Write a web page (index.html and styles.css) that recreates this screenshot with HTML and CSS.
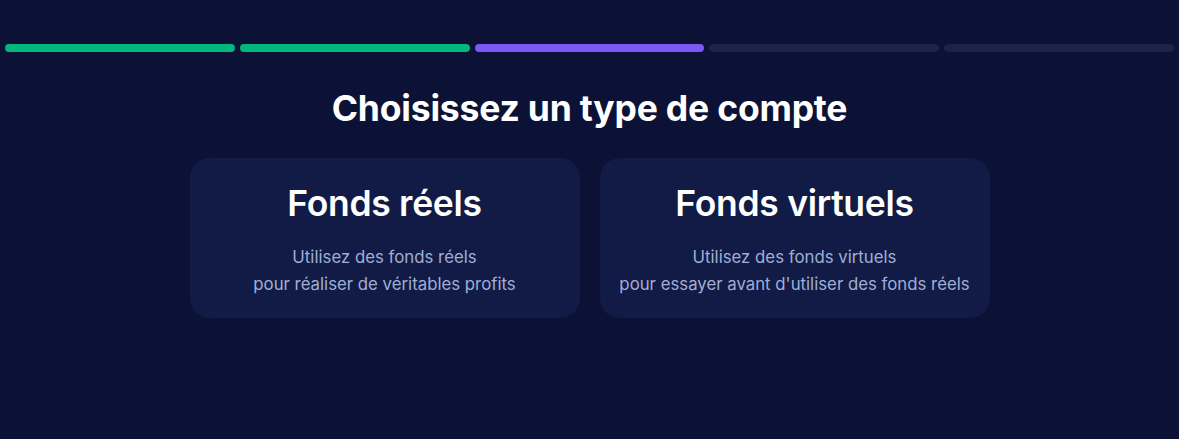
FILE: index.html
```html
<!DOCTYPE html>
<html lang="fr">
<head>
<meta charset="utf-8">
<link rel="stylesheet" href="styles.css">
</head>
<body>
<div class="page">
  <div class="progress">
    <div class="step done"></div>
    <div class="step done"></div>
    <div class="step current"></div>
    <div class="step"></div>
    <div class="step"></div>
  </div>
  <h1 class="title">Choisissez un type de compte</h1>
  <div class="cards">
    <div class="card">
      <h2 class="card-title">Fonds réels</h2>
      <p class="card-text">Utilisez des fonds réels<br>pour réaliser de véritables profits</p>
    </div>
    <div class="card">
      <h2 class="card-title">Fonds virtuels</h2>
      <p class="card-text">Utilisez des fonds virtuels<br>pour essayer avant d'utiliser des fonds réels</p>
    </div>
  </div>
</div>
</body>
</html>
```
FILE: styles.css
```css
html, body {
  margin: 0;
  padding: 0;
  background: #0b1236;
  height: 100%;
}
body {
  font-family: "Inter", "Noto Sans", sans-serif;
  color: #ffffff;
}
.page {
  padding: 44px 5px 0 5px;
}
.progress {
  display: flex;
  gap: 5px;
}
.step {
  flex: 1;
  height: 8px;
  border-radius: 4px;
  background: #1b2447;
}
.step.done {
  background: #00b67a;
}
.step.current {
  background: #7a5af5;
}
.title {
  margin: 37px 0 0 0;
  text-align: center;
  font-size: 35.5px;
  line-height: 40px;
  font-weight: 700;
  letter-spacing: -0.2px;
}
.cards {
  display: flex;
  justify-content: center;
  gap: 20px;
  margin-top: 29px;
}
.card {
  width: 390px;
  height: 160px;
  box-sizing: border-box;
  background: #111b45;
  border-radius: 20px;
  text-align: center;
  padding-top: 24px;
}
.card-title {
  margin: 0;
  font-size: 35.5px;
  line-height: 44px;
  font-weight: 600;
  letter-spacing: -0.3px;
}
.card-text {
  margin: 18px 0 0 0;
  font-size: 16.8px;
  line-height: 27px;
  color: #a0aed6;
}
```
